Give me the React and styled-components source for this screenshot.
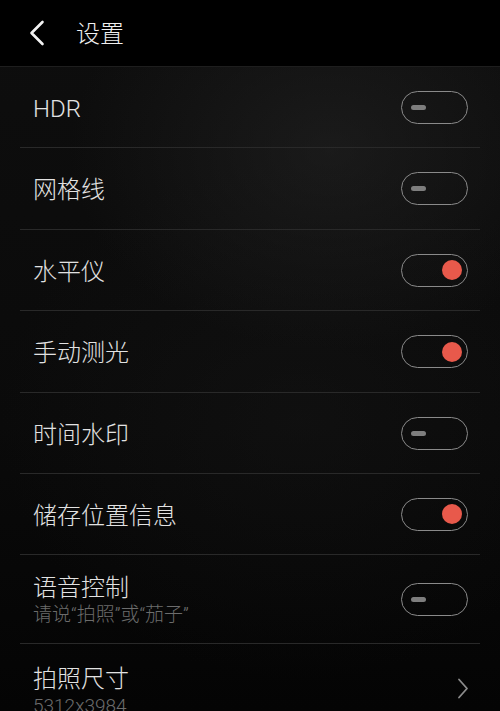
import React from "react";
import styled, { createGlobalStyle } from "styled-components";

const GlobalStyle = createGlobalStyle`
  html, body {
    margin: 0;
    padding: 0;
    background: #000;
  }
  body {
    font-family: Roboto, "Noto Sans CJK SC", "Noto Sans", sans-serif;
  }
`;

const Page = styled.div`
  width: 500px;
  height: 711px;
  overflow: hidden;
  background:
    radial-gradient(ellipse 260px 200px at 330px 150px, rgba(40, 40, 40, 0.5), rgba(0, 0, 0, 0) 100%),
    radial-gradient(ellipse 300px 260px at 300px 420px, rgba(26, 26, 26, 0.35), rgba(0, 0, 0, 0) 100%),
    linear-gradient(180deg, #0e0e0e 0%, #0a0a0a 60%, #040404 100%);
  color: #e4e4e4;
`;

const Header = styled.header`
  height: 66px;
  background: #000;
  border-bottom: 1px solid #1e1e1e;
  display: flex;
  align-items: center;
  padding-left: 27px;
  gap: 30px;
`;

const BackButton = styled.button`
  background: none;
  border: 0;
  padding: 0;
  width: 19px;
  height: 26px;
  display: flex;
  align-items: center;
  justify-content: center;
  color: #f2f2f2;
`;

const Title = styled.h1`
  margin: 0;
  font-size: 24px;
  font-weight: 300;
  color: #f0f0f0;
  line-height: 1;
  padding-top: 2px;
`;

const List = styled.div`
  padding: 0 20px;
`;

const Row = styled.div`
  box-sizing: border-box;
  height: ${(p) => p.$h}px;
  border-bottom: ${(p) => (p.$last ? "none" : "1px solid #292929")};
  display: flex;
  align-items: ${(p) => (p.$top ? "flex-start" : "center")};
  justify-content: space-between;
  padding: ${(p) => (p.$top ? "18px 13px 0 13px" : "0 12px 0 13px")};
`;

const Labels = styled.div`
  display: flex;
  flex-direction: column;
  padding-top: 3px;
`;

const Label = styled.div`
  font-size: 24px;
  line-height: 28px;
  color: #e2e2e2;
  font-weight: 300;
`;

const Sub = styled.div`
  font-size: 19px;
  line-height: 24px;
  margin-top: 1px;
  color: #6c6c6c;
  font-weight: 300;
`;

const Toggle = styled.div`
  box-sizing: border-box;
  width: 67px;
  height: 33px;
  border: 1.5px solid #8a8a8a;
  border-radius: 17px;
  display: flex;
  align-items: center;
  justify-content: ${(p) => (p.$on ? "flex-end" : "flex-start")};
  padding: ${(p) => (p.$on ? "0 5px" : "0 8.5px")};
`;

const Knob = styled.div`
  width: 20px;
  height: 20px;
  border-radius: 50%;
  background: #e8594b;
`;

const Dash = styled.div`
  width: 15px;
  height: 5px;
  border-radius: 3px;
  background: #7e7e7e;
`;

const Chevron = styled.div`
  margin-top: 16px;
  margin-right: -2px;
  color: #8c8c8c;
  display: flex;
`;

const items = [
  { label: "HDR", on: false, h: 81 },
  { label: "网格线", on: false, h: 82 },
  { label: "水平仪", on: true, h: 81 },
  { label: "手动测光", on: true, h: 82 },
  { label: "时间水印", on: false, h: 81 },
  { label: "储存位置信息", on: true, h: 81 },
  { label: "语音控制", sub: "请说“拍照”或“茄子”", on: false, h: 89 },
];

function Switch({ on }) {
  return <Toggle $on={on}>{on ? <Knob /> : <Dash />}</Toggle>;
}

export default function App() {
  return (
    <>
      <GlobalStyle />
      <Page>
        <Header>
          <BackButton>
            <svg width="17" height="26" viewBox="0 0 17 26" fill="none">
              <path d="M14.5 2 L3.5 13 L14.5 24" stroke="currentColor" strokeWidth="2.6" strokeLinecap="round" strokeLinejoin="round" />
            </svg>
          </BackButton>
          <Title>设置</Title>
        </Header>
        <List>
          {items.map((it) => (
            <Row key={it.label} $h={it.h}>
              <Labels>
                <Label>{it.label}</Label>
                {it.sub && <Sub>{it.sub}</Sub>}
              </Labels>
              <Switch on={it.on} />
            </Row>
          ))}
          <Row $h={70} $top $last>
            <Labels>
              <Label>拍照尺寸</Label>
              <Sub>5312x3984</Sub>
            </Labels>
            <Chevron>
              <svg width="12" height="21" viewBox="0 0 12 21" fill="none">
                <path d="M2 1.5 L10 10.5 L2 19.5" stroke="currentColor" strokeWidth="1.8" strokeLinecap="round" strokeLinejoin="round" />
              </svg>
            </Chevron>
          </Row>
        </List>
      </Page>
    </>
  );
}
